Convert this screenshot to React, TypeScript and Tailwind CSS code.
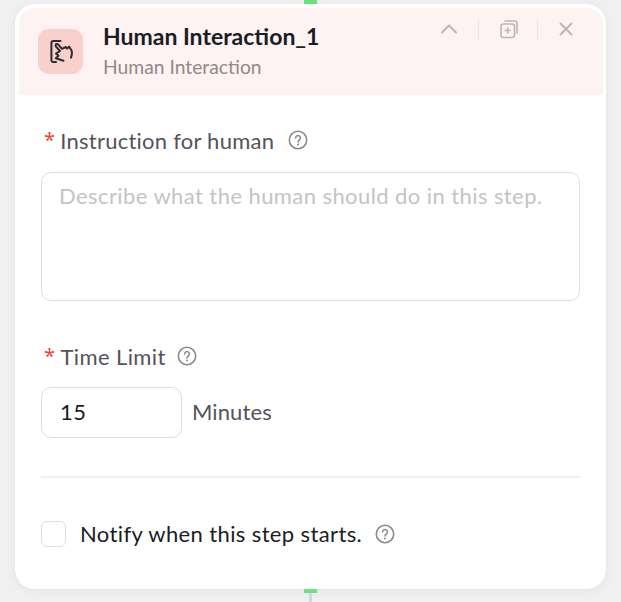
import React from 'react';

const HelpIcon = () => (
  <svg width="20" height="20" viewBox="0 0 20 20" fill="none" className="shrink-0">
    <circle cx="10" cy="10" r="8.7" stroke="#8a8a8a" strokeWidth="1.6" />
    <path d="M7.6 8a2.4 2.4 0 1 1 3.7 2c-.9.6-1.3 1-1.3 2" stroke="#8a8a8a" strokeWidth="1.5" strokeLinecap="round" />
    <circle cx="10" cy="14.6" r="1" fill="#8a8a8a" />
  </svg>
);

const Required = () => (
  <span className="ml-[3px] mr-[5px] font-['Noto_Sans',sans-serif] text-[20px] leading-none text-[#f5402c]">*</span>
);

const App: React.FC = () => {
  return (
    <div className="relative h-[602px] w-[621px] overflow-hidden bg-[#f0f0f0] pt-[4px] pl-[15px] font-['Lato','Noto_Sans',sans-serif]">
      <div className="absolute left-[304px] top-0 h-[4px] w-[13px] bg-[#6ee07f]" />

      <div className="relative h-[585px] w-[591px] rounded-[20px] border-[4px] border-r-[3px] border-white bg-white shadow-[0_2px_10px_rgba(0,0,0,0.06)]">
        {/* Header */}
        <div className="flex h-[87px] items-start justify-between rounded-t-[16px] bg-[#fdf3f2] pl-[19px] pr-[28px]">
          <div className="flex items-start gap-[20px]">
            <div className="mt-[21px] flex h-[45px] w-[45px] items-center justify-center rounded-[11px] bg-[#f9d0cb]">
              <svg width="24" height="24" viewBox="0 0 24 24" fill="none" stroke="#2b2b33" strokeWidth="2" strokeLinecap="round" strokeLinejoin="round">
                <path d="M11.5 1H4.2A1.8 1.8 0 0 0 2.4 2.8v17.4A1.8 1.8 0 0 0 4.2 22H7" />
                <path d="M7 4.4c.6-.7 1.5-.6 2.1 0L13 8.8l3.8-1.8 1.4 1.6 1.9-2 2.4 4c.7 1.6.5 4-.5 7" />
                <path d="M7 4.4c-.7.8-.5 1.6 0 2.2l4 4.4-4 2.6 2.5 2.2-2.7 2.4 7.7 2.6" />
              </svg>
            </div>
            <div className="pt-[13px]">
              <div className="text-[23px] font-bold leading-[30px] text-[#1c1c24]">Human Interaction_1</div>
              <div className="mt-[3px] text-[19.3px] leading-[26px] text-[#8f8a8a]">Human Interaction</div>
            </div>
          </div>

          <div className="mt-[10px] flex items-center text-[#bcb6b6]">
            <svg width="20" height="20" viewBox="0 0 20 20" fill="none" stroke="currentColor" strokeWidth="2" strokeLinecap="round" strokeLinejoin="round">
              <path d="M3 13.5l7-7 7 7" />
            </svg>
            <div className="mx-[19px] h-[22px] w-px bg-[#ece6e5]" />
            <svg width="20" height="20" viewBox="0 0 20 20" fill="none" stroke="currentColor" strokeWidth="1.6" strokeLinecap="round" strokeLinejoin="round" className="translate-x-px">
              <rect x="2" y="5" width="13.5" height="13.5" rx="2.5" />
              <path d="M6 2h9.5A2.5 2.5 0 0 1 18 4.5V14M8.7 9v5M6.2 11.5h5" />
            </svg>
            <div className="mx-[19px] h-[22px] w-px bg-[#ece6e5]" />
            <svg width="18" height="18" viewBox="0 0 18 18" fill="none" stroke="currentColor" strokeWidth="1.9" strokeLinecap="round">
              <path d="M3.5 3.5l11 11M14.5 3.5l-11 11" />
            </svg>
          </div>
        </div>

        {/* Body */}
        <div className="px-[22px] pr-[23px]">
          <div className="mt-[31px] flex h-[28px] items-center text-[22px] tracking-[0.24px] text-[#55525a]">
            <Required />
            <span>Instruction for human</span>
            <span className="ml-[14px]"><HelpIcon /></span>
          </div>
          <textarea
            readOnly
            placeholder="Describe what the human should do in this step."
            className="mt-[18px] block h-[129px] w-full resize-none rounded-[10px] border border-[#dedede] px-[17px] py-[8px] text-[22px] leading-[30px] tracking-[0.42px] outline-none placeholder:text-[#c4c4c4]"
          />

          <div className="mt-[41px] flex h-[28px] items-center text-[22px] tracking-[0.4px] text-[#55525a]">
            <Required />
            <span>Time Limit</span>
            <span className="ml-[11px]"><HelpIcon /></span>
          </div>
          <div className="mt-[17px] flex items-center gap-[10px]">
            <div className="flex h-[51px] w-[141px] items-center rounded-[10px] border border-[#dedede] pb-[2px] pl-[18px] text-[22px] tracking-[0.4px] text-[#1c1c24]">15</div>
            <span className="pb-[2px] text-[22px] tracking-[0.1px] text-[#55525a]">Minutes</span>
          </div>

          <div className="mt-[38px] h-[2px] bg-[#f0f0f0]" />

          <div className="mt-[39px] flex items-center">
            <div className="h-[26px] w-[25px] rounded-[6px] border border-[#dedede] bg-white" />
            <span className="ml-[14px] text-[22px] tracking-[0.38px] text-[#1c1c24]">Notify when this step starts.</span>
            <span className="ml-[13px]"><HelpIcon /></span>
          </div>
        </div>
      </div>

      <div className="absolute left-[304px] top-[589px] h-[4px] w-[13px] bg-[#6ee07f]" />
      <div className="absolute left-[309px] top-[593px] h-[9px] w-[3px] bg-[#d4d8de]" />
    </div>
  );
};

export default App;
